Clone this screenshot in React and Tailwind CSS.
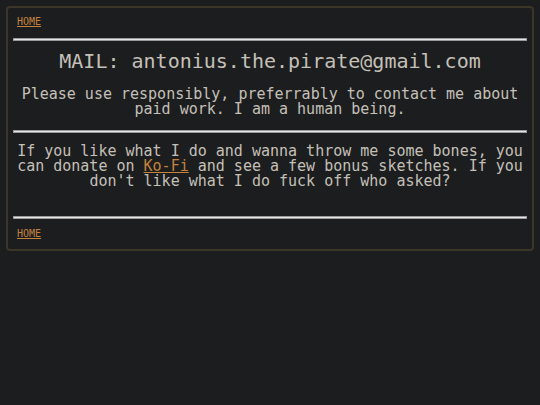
export default function App() {
  return (
    <div className="min-h-[405px] bg-[#1c1d1f] p-[6px] font-['DejaVu_Sans_Mono',monospace] text-[#c4c0b8]">
      <div className="rounded-[4px] border-2 border-[#3b3628] px-[5px] pb-[9px]">
        <div className="px-[4px] pt-[8px] pb-[10px] text-[10px] leading-[12px]">
          <a href="#" className="text-[#c4823c] underline">HOME</a>
        </div>

        <div className="h-[3px] border border-[#9a9a9a] bg-[#e6e6e6]" />

        <div className="pt-[8px] pb-[13px] text-center">
          <h1 className="text-[20px] leading-[24px]">MAIL: antonius.the.pirate@gmail.com</h1>
          <p className="mt-[14px] px-[2px] text-[15px] leading-[15px]">
            Please use responsibly, preferrably to contact me about paid work. I am a human being.
          </p>
        </div>

        <div className="h-[3px] border border-[#9a9a9a] bg-[#e6e6e6]" />

        <p className="pt-[11px] pb-[27px] text-center text-[15px] leading-[15px]">
          If you like what I do and wanna throw me some bones, you can donate on{" "}
          <a href="#" className="text-[#c4823c] underline">Ko-Fi</a> and see a few bonus sketches. If you don't like what I do fuck off who asked?
        </p>

        <div className="h-[3px] border border-[#9a9a9a] bg-[#e6e6e6]" />

        <div className="px-[4px] pt-[9px] text-[10px] leading-[12px]">
          <a href="#" className="text-[#c4823c] underline">HOME</a>
        </div>
      </div>
    </div>
  );
}
